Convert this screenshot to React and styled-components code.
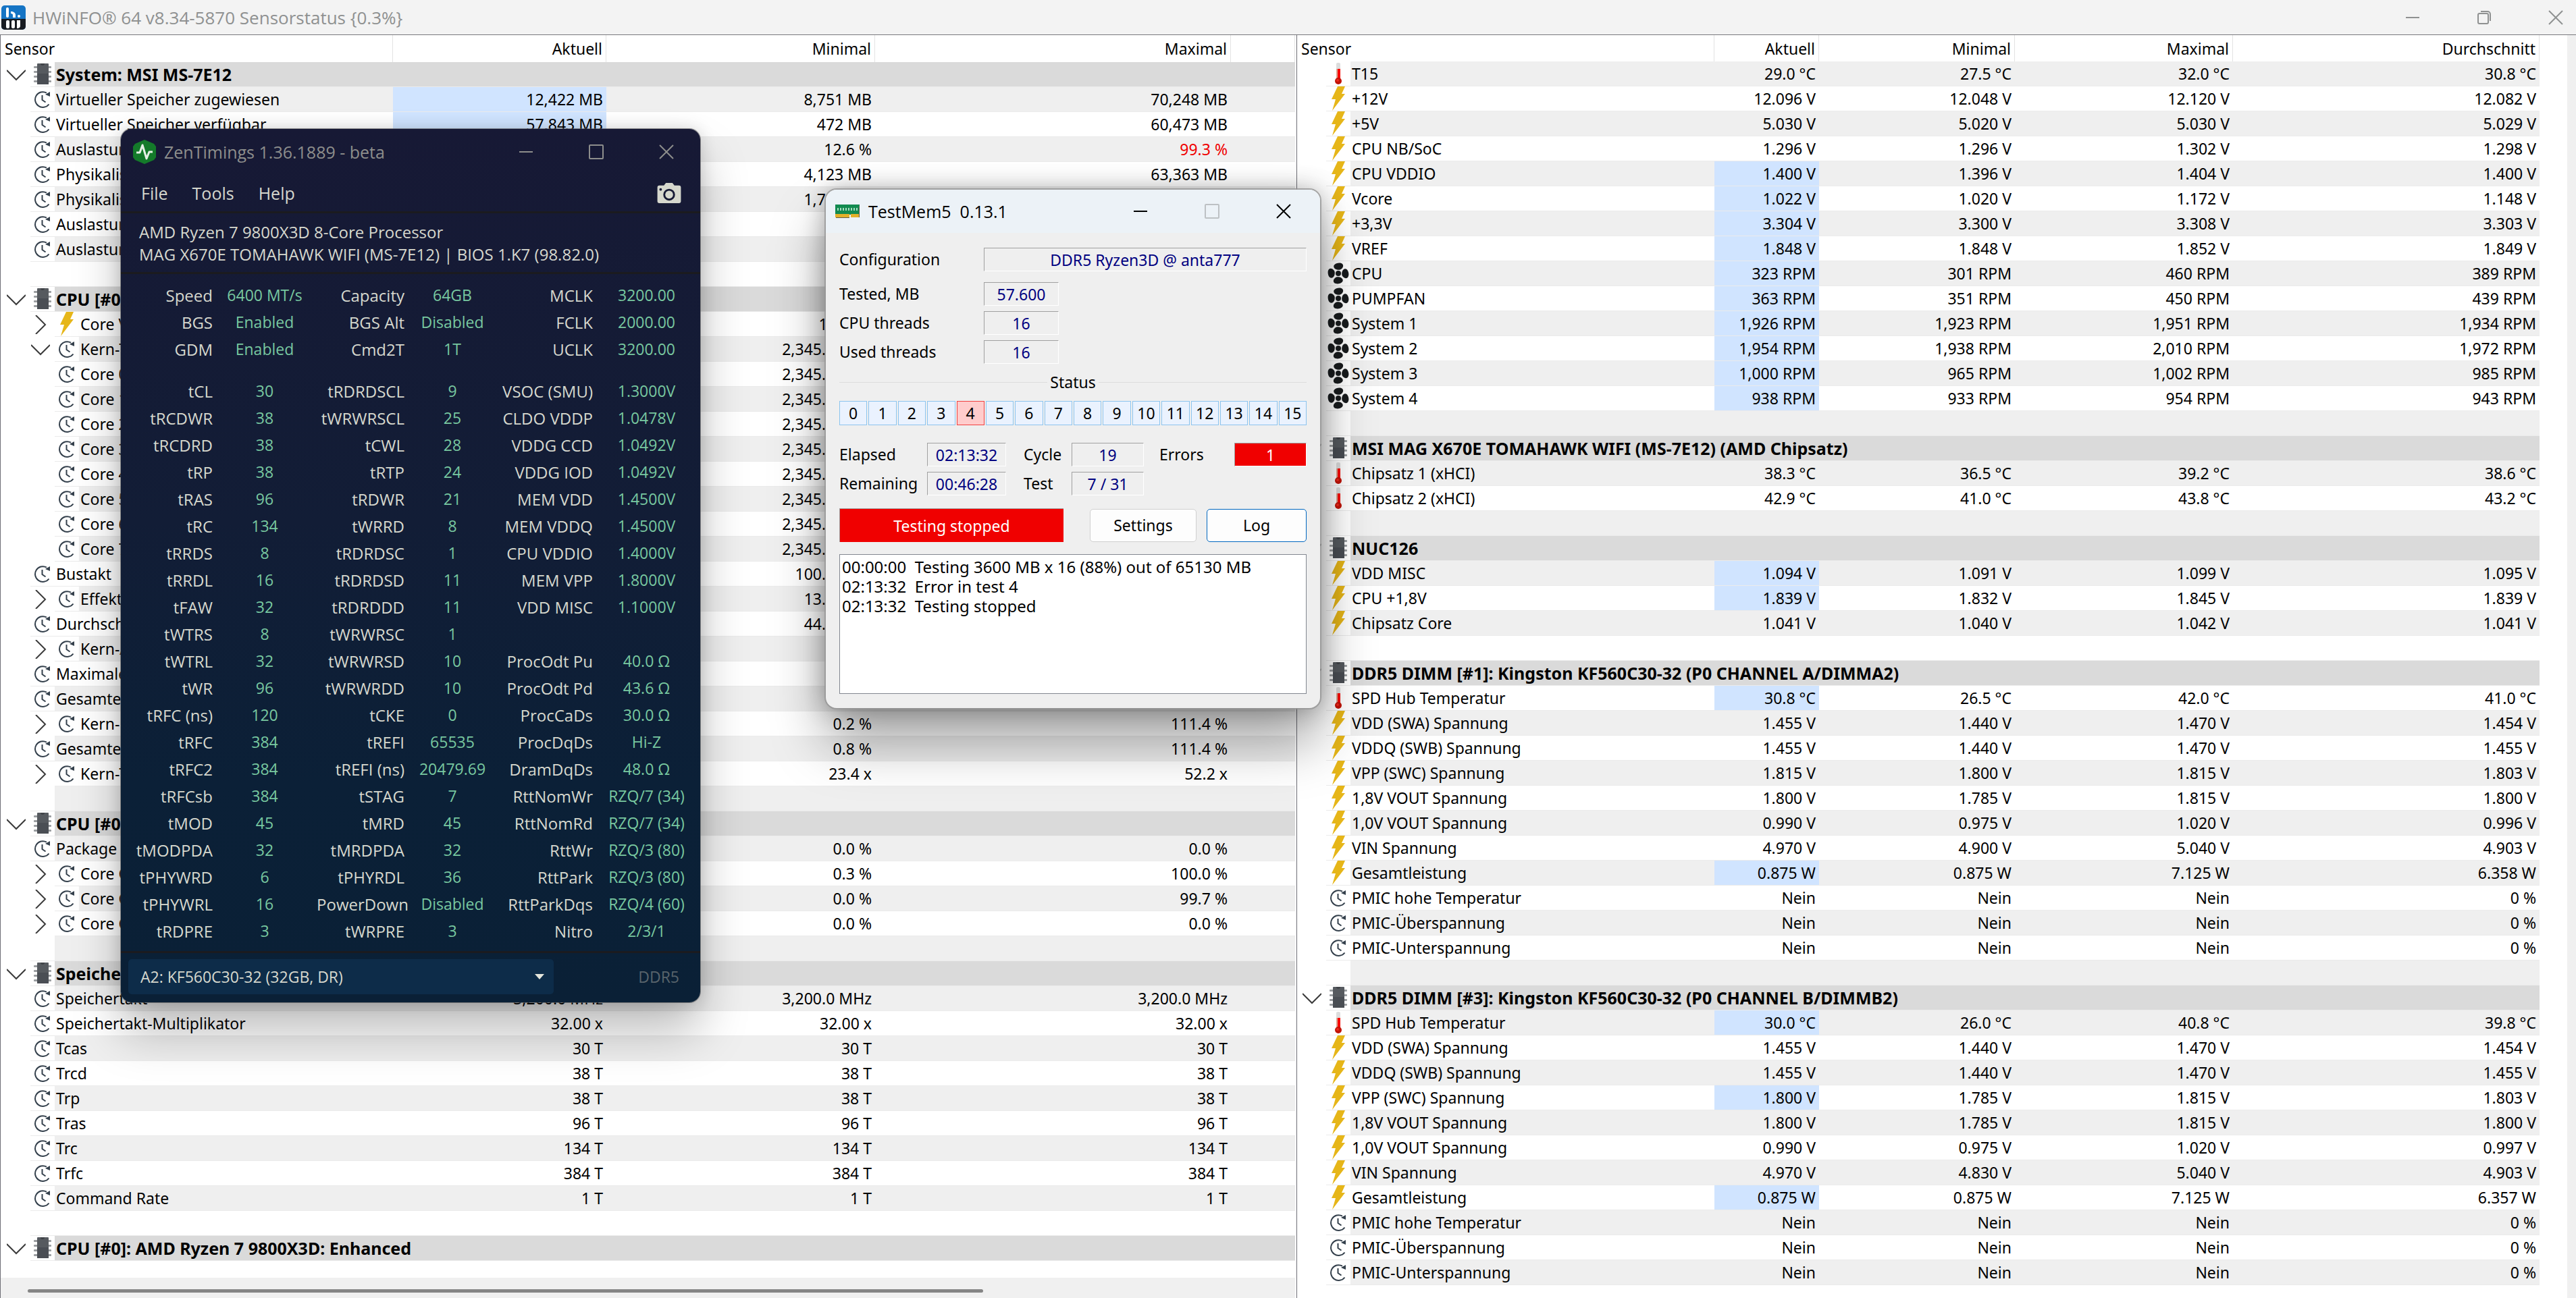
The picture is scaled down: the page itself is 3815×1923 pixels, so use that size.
import React from 'react'
import styled, { createGlobalStyle, css } from 'styled-components'

const GlobalStyle = createGlobalStyle`
  * { box-sizing: border-box; }
  body { margin: 0; background: #fff; }
  button, input, select, textarea { font: inherit; color: inherit; margin: 0; }
`

const tahoma = "'Noto Sans', 'Open Sans', sans-serif"
const segoe = "'Open Sans', 'Noto Sans', sans-serif"

/* ---------- data ---------- */

const g = name => ({ kind: 'group', icon: 'chip', name })
const blank = () => ({ kind: 'blank' })
const row = (icon, name, values = [], extra = {}) => ({ kind: 'row', icon, name, values, ...extra })
const child = (name, values, caret, icon = 'clock') => row(icon, name, values, { nested: true, caret })

const core = n => child(`Core ${n}`, ['', '2,345.6 MHz', ''])

const leftRows = [
  g('System: MSI MS-7E12'),
  row('clock', 'Virtueller Speicher zugewiesen', ['12,422 MB', '8,751 MB', '70,248 MB'], { hot: true }),
  row('clock', 'Virtueller Speicher verfügbar', ['57,843 MB', '472 MB', '60,473 MB'], { hot: true }),
  row('clock', 'Auslastung', ['', '12.6 %', '99.3 %'], { alert: 2 }),
  row('clock', 'Physikalisch', ['', '4,123 MB', '63,363 MB']),
  row('clock', 'Physikalisch', ['', '1,780 MB', '']),
  row('clock', 'Auslastung'),
  row('clock', 'Auslastung'),
  blank(),
  g('CPU [#0]'),
  child('Core VIDs', ['', '1.050 V', ''], 'right', 'bolt'),
  child('Kern-Takte', ['', '2,345.6 MHz', ''], 'down'),
  ...[0, 1, 2, 3, 4, 5, 6, 7].map(core),
  row('clock', 'Bustakt', ['', '100.0 MHz', '']),
  child('Effektiv', ['', '13.1 MHz', ''], 'right'),
  row('clock', 'Durchschnitt', ['', '44.1 MHz', '']),
  child('Kern-Auslastung', [], 'right'),
  row('clock', 'Maximale'),
  row('clock', 'Gesamte'),
  child('Kern-Nutzung', ['', '0.2 %', '111.4 %'], 'right'),
  row('clock', 'Gesamte', ['', '0.8 %', '111.4 %']),
  child('Kern-Takt', ['', '23.4 x', '52.2 x'], 'right'),
  blank(),
  g('CPU [#0]'),
  row('clock', 'Package', ['', '0.0 %', '0.0 %']),
  child('Core C0', ['', '0.3 %', '100.0 %'], 'right'),
  child('Core C1', ['', '0.0 %', '99.7 %'], 'right'),
  child('Core C6', ['', '0.0 %', '0.0 %'], 'right'),
  blank(),
  g('Speicher'),
  row('clock', 'Speichertakt', ['3,200.0 MHz', '3,200.0 MHz', '3,200.0 MHz']),
  row('clock', 'Speichertakt-Multiplikator', ['32.00 x', '32.00 x', '32.00 x']),
  row('clock', 'Tcas', ['30 T', '30 T', '30 T']),
  row('clock', 'Trcd', ['38 T', '38 T', '38 T']),
  row('clock', 'Trp', ['38 T', '38 T', '38 T']),
  row('clock', 'Tras', ['96 T', '96 T', '96 T']),
  row('clock', 'Trc', ['134 T', '134 T', '134 T']),
  row('clock', 'Trfc', ['384 T', '384 T', '384 T']),
  row('clock', 'Command Rate', ['1 T', '1 T', '1 T']),
  blank(),
  g('CPU [#0]: AMD Ryzen 7 9800X3D: Enhanced'),
]

const hot = { hot: true }

const rightRows = [
  row('temp', 'T15', ['29.0 °C', '27.5 °C', '32.0 °C', '30.8 °C']),
  row('bolt', '+12V', ['12.096 V', '12.048 V', '12.120 V', '12.082 V']),
  row('bolt', '+5V', ['5.030 V', '5.020 V', '5.030 V', '5.029 V']),
  row('bolt', 'CPU NB/SoC', ['1.296 V', '1.296 V', '1.302 V', '1.298 V']),
  row('bolt', 'CPU VDDIO', ['1.400 V', '1.396 V', '1.404 V', '1.400 V'], hot),
  row('bolt', 'Vcore', ['1.022 V', '1.020 V', '1.172 V', '1.148 V'], hot),
  row('bolt', '+3,3V', ['3.304 V', '3.300 V', '3.308 V', '3.303 V'], hot),
  row('bolt', 'VREF', ['1.848 V', '1.848 V', '1.852 V', '1.849 V'], hot),
  row('fan', 'CPU', ['323 RPM', '301 RPM', '460 RPM', '389 RPM'], hot),
  row('fan', 'PUMPFAN', ['363 RPM', '351 RPM', '450 RPM', '439 RPM'], hot),
  row('fan', 'System 1', ['1,926 RPM', '1,923 RPM', '1,951 RPM', '1,934 RPM'], hot),
  row('fan', 'System 2', ['1,954 RPM', '1,938 RPM', '2,010 RPM', '1,972 RPM'], hot),
  row('fan', 'System 3', ['1,000 RPM', '965 RPM', '1,002 RPM', '985 RPM'], hot),
  row('fan', 'System 4', ['938 RPM', '933 RPM', '954 RPM', '943 RPM'], hot),
  blank(),
  g('MSI MAG X670E TOMAHAWK WIFI (MS-7E12) (AMD Chipsatz)'),
  row('temp', 'Chipsatz 1 (xHCI)', ['38.3 °C', '36.5 °C', '39.2 °C', '38.6 °C']),
  row('temp', 'Chipsatz 2 (xHCI)', ['42.9 °C', '41.0 °C', '43.8 °C', '43.2 °C']),
  blank(),
  g('NUC126'),
  row('bolt', 'VDD MISC', ['1.094 V', '1.091 V', '1.099 V', '1.095 V'], hot),
  row('bolt', 'CPU +1,8V', ['1.839 V', '1.832 V', '1.845 V', '1.839 V'], hot),
  row('bolt', 'Chipsatz Core', ['1.041 V', '1.040 V', '1.042 V', '1.041 V']),
  blank(),
  g('DDR5 DIMM [#1]: Kingston KF560C30-32 (P0 CHANNEL A/DIMMA2)'),
  row('temp', 'SPD Hub Temperatur', ['30.8 °C', '26.5 °C', '42.0 °C', '41.0 °C'], hot),
  row('bolt', 'VDD (SWA) Spannung', ['1.455 V', '1.440 V', '1.470 V', '1.454 V']),
  row('bolt', 'VDDQ (SWB) Spannung', ['1.455 V', '1.440 V', '1.470 V', '1.455 V']),
  row('bolt', 'VPP (SWC) Spannung', ['1.815 V', '1.800 V', '1.815 V', '1.803 V']),
  row('bolt', '1,8V VOUT Spannung', ['1.800 V', '1.785 V', '1.815 V', '1.800 V']),
  row('bolt', '1,0V VOUT Spannung', ['0.990 V', '0.975 V', '1.020 V', '0.996 V']),
  row('bolt', 'VIN Spannung', ['4.970 V', '4.900 V', '5.040 V', '4.903 V']),
  row('bolt', 'Gesamtleistung', ['0.875 W', '0.875 W', '7.125 W', '6.358 W'], hot),
  row('clock', 'PMIC hohe Temperatur', ['Nein', 'Nein', 'Nein', '0 %']),
  row('clock', 'PMIC-Überspannung', ['Nein', 'Nein', 'Nein', '0 %']),
  row('clock', 'PMIC-Unterspannung', ['Nein', 'Nein', 'Nein', '0 %']),
  blank(),
  g('DDR5 DIMM [#3]: Kingston KF560C30-32 (P0 CHANNEL B/DIMMB2)'),
  row('temp', 'SPD Hub Temperatur', ['30.0 °C', '26.0 °C', '40.8 °C', '39.8 °C'], hot),
  row('bolt', 'VDD (SWA) Spannung', ['1.455 V', '1.440 V', '1.470 V', '1.454 V']),
  row('bolt', 'VDDQ (SWB) Spannung', ['1.455 V', '1.440 V', '1.470 V', '1.455 V']),
  row('bolt', 'VPP (SWC) Spannung', ['1.800 V', '1.785 V', '1.815 V', '1.803 V'], hot),
  row('bolt', '1,8V VOUT Spannung', ['1.800 V', '1.785 V', '1.815 V', '1.800 V']),
  row('bolt', '1,0V VOUT Spannung', ['0.990 V', '0.975 V', '1.020 V', '0.997 V']),
  row('bolt', 'VIN Spannung', ['4.970 V', '4.830 V', '5.040 V', '4.903 V']),
  row('bolt', 'Gesamtleistung', ['0.875 W', '0.875 W', '7.125 W', '6.357 W'], hot),
  row('clock', 'PMIC hohe Temperatur', ['Nein', 'Nein', 'Nein', '0 %']),
  row('clock', 'PMIC-Überspannung', ['Nein', 'Nein', 'Nein', '0 %']),
  row('clock', 'PMIC-Unterspannung', ['Nein', 'Nein', 'Nein', '0 %']),
]

const speeds = [
  ['Speed', '6400 MT/s', 'Capacity', '64GB', 'MCLK', '3200.00'],
  ['BGS', 'Enabled', 'BGS Alt', 'Disabled', 'FCLK', '2000.00'],
  ['GDM', 'Enabled', 'Cmd2T', '1T', 'UCLK', '3200.00'],
]

const timings = [
  ['tCL', '30', 'tRDRDSCL', '9', 'VSOC (SMU)', '1.3000V'],
  ['tRCDWR', '38', 'tWRWRSCL', '25', 'CLDO VDDP', '1.0478V'],
  ['tRCDRD', '38', 'tCWL', '28', 'VDDG CCD', '1.0492V'],
  ['tRP', '38', 'tRTP', '24', 'VDDG IOD', '1.0492V'],
  ['tRAS', '96', 'tRDWR', '21', 'MEM VDD', '1.4500V'],
  ['tRC', '134', 'tWRRD', '8', 'MEM VDDQ', '1.4500V'],
  ['tRRDS', '8', 'tRDRDSC', '1', 'CPU VDDIO', '1.4000V'],
  ['tRRDL', '16', 'tRDRDSD', '11', 'MEM VPP', '1.8000V'],
  ['tFAW', '32', 'tRDRDDD', '11', 'VDD MISC', '1.1000V'],
  ['tWTRS', '8', 'tWRWRSC', '1', '', ''],
  ['tWTRL', '32', 'tWRWRSD', '10', 'ProcOdt Pu', '40.0 Ω'],
  ['tWR', '96', 'tWRWRDD', '10', 'ProcOdt Pd', '43.6 Ω'],
  ['tRFC (ns)', '120', 'tCKE', '0', 'ProcCaDs', '30.0 Ω'],
  ['tRFC', '384', 'tREFI', '65535', 'ProcDqDs', 'Hi-Z'],
  ['tRFC2', '384', 'tREFI (ns)', '20479.69', 'DramDqDs', '48.0 Ω'],
  ['tRFCsb', '384', 'tSTAG', '7', 'RttNomWr', 'RZQ/7 (34)'],
  ['tMOD', '45', 'tMRD', '45', 'RttNomRd', 'RZQ/7 (34)'],
  ['tMODPDA', '32', 'tMRDPDA', '32', 'RttWr', 'RZQ/3 (80)'],
  ['tPHYWRD', '6', 'tPHYRDL', '36', 'RttPark', 'RZQ/3 (80)'],
  ['tPHYWRL', '16', 'PowerDown', 'Disabled', 'RttParkDqs', 'RZQ/4 (60)'],
  ['tRDPRE', '3', 'tWRPRE', '3', 'Nitro', '2/3/1'],
]

/* ---------- icons ---------- */

const ClockIcon = () => (
  <svg width="26" height="26" viewBox="0 0 26 26" fill="none" stroke="#34404c">
    <path d="M19 3.6A11.4 11.4 0 1 0 22.5 20.5" strokeWidth="2" />
    <path d="M24 2v7l-7-3z" fill="#34404c" stroke="none" />
    <path d="M12.5 7v7l5 3.5" strokeWidth="2" />
  </svg>
)

const BoltIcon = () => (
  <svg width="20" height="36" viewBox="0 0 20 36">
    <path d="M9 0h11l-5 11h5L1 36l5-17H0z" fill="#e6b619" />
  </svg>
)

const TempIcon = () => (
  <svg width="10" height="34" viewBox="0 0 10 34">
    <rect x="2" y="1" width="6" height="28" rx="2" fill="#dcdcdc" />
    <rect x="2" y="10" width="2" height="16" fill="#d9a793" />
    <rect x="4" y="10" width="4" height="16" fill="#fa0a04" />
    <circle cx="5" cy="28" r="5" fill="#c21408" />
    <circle cx="4" cy="27" r="2" fill="#f0281c" />
  </svg>
)

const FanIcon = () => (
  <svg width="32" height="32" viewBox="0 0 32 32" fill="#191c1e">
    {[0, 90, 180, 270].map(a => (
      <path
        key={a}
        transform={`rotate(${a} 16 16)`}
        d="M14 10.500C10 9.500 8 6 10 3.500 12.500.5 19-.5 22 2c2.500 2.500.5 6-1.500 7.500-1.500 1.500-4 1.500-6.500 1z"
      />
    ))}
    <circle cx="16" cy="16" r="4" />
  </svg>
)

const ChipIcon = () => (
  <svg width="28" height="34" viewBox="0 0 28 34">
    <g fill="#9b9ea1">
      {[5, 12, 19, 26].map(y => <rect key={y} x="1" y={y} width="26" height="3" rx="1" />)}
    </g>
    <rect x="6" y="1" width="17" height="31" rx="1" fill="#565a5f" />
    <rect x="6" y="16" width="17" height="16" fill="#4a4e54" />
    <path d="M11 1a3 3 0 0 0 6 0z" fill="#3f4247" />
  </svg>
)

const Caret = ({ dir }) => (
  <svg width="28" height="28" viewBox="0 0 28 28" fill="none" stroke="#3c3c3c" strokeWidth="2">
    {dir === 'down' ? <path d="M0 7l14 14L28 7" /> : <path d="M7 0l14 14L7 28" />}
  </svg>
)

const icons = { clock: ClockIcon, bolt: BoltIcon, temp: TempIcon, fan: FanIcon, chip: ChipIcon }

const HwinfoLogo = () => (
  <svg width="36" height="36" viewBox="0 0 36 36">
    <rect width="36" height="36" rx="5" fill="#1574c4" />
    <path d="M0 20h36v11a5 5 0 0 1-5 5H5a5 5 0 0 1-5-5z" fill="#171b21" />
    <g fill="#fff">
      <rect x="7" y="3" width="4" height="15" rx="2" />
      <path d="M14 9c4 0 7 2 7 5v4h-4v-4c0-1-1-2-3-2z" />
      <circle cx="26" cy="16" r="2" />
      <rect x="7" y="22" width="5" height="12" rx="2" />
      <rect x="15" y="22" width="5" height="12" rx="2" />
      <path d="M23 22h5v8c0 3-2 4-5 4z" />
    </g>
  </svg>
)

const ZenLogo = () => (
  <svg width="34" height="36" viewBox="0 0 34 36">
    <path d="M17 0l14 6 3 4v16l-3 4-14 6-14-6-3-4V10l3-4z" fill="#147a2a" />
    <path d="M5 19h5l4-11 6 20 4-10h5" fill="none" stroke="#e6f0e6" strokeWidth="3" strokeLinejoin="round" />
  </svg>
)

const RamLogo = () => (
  <svg width="38" height="22" viewBox="0 0 38 22">
    <rect x="1" y="1" width="36" height="15" fill="#128a50" />
    <path d="M4 6h2v4h-2zM8 6h2v4h-2zM12 6h2v4h-2zM16 6h2v4h-2zM20 6h2v4h-2zM24 6h2v4h-2zM28 6h2v4h-2zM32 6h2v4h-2z" fill="#a8dcc0" />
    <path d="M1 15h21v5H1zM24 15h12v5H24z" fill="#e3b02a" />
    <path d="M36 3h1v17h-1zM2 20h20v1H2z" fill="#5d5d4a" />
  </svg>
)

const CameraIcon = () => (
  <svg width="36" height="30" viewBox="0 0 36 31">
    <path
      fillRule="evenodd"
      fill="#d6d8ce"
      d="M13 0h10l3 4h7a3 3 0 0 1 3 3v21a3 3 0 0 1-3 3H3a3 3 0 0 1-3-3V7a3 3 0 0 1 3-3h7zM18 9a9 9 0 1 0 0 18 9 9 0 0 0 0-18zM5 8a2 2 0 1 0 0 4 2 2 0 0 0 0-4z"
    />
    <circle cx="18" cy="18" r="6" fill="#d6d8ce" />
  </svg>
)

const MinimizeIcon = () => (
  <svg width="22" height="22" viewBox="0 0 22 22" fill="none" stroke="currentColor" strokeWidth="2">
    <path d="M1 11h20" />
  </svg>
)

const MaximizeIcon = () => (
  <svg width="22" height="22" viewBox="0 0 22 22" fill="none" stroke="currentColor" strokeWidth="2">
    <rect x="1" y="1" width="20" height="20" rx="1" />
  </svg>
)

const RestoreIcon = () => (
  <svg width="22" height="22" viewBox="0 0 22 22" fill="none" stroke="currentColor" strokeWidth="2">
    <rect x="2" y="5" width="15" height="15" rx="2" />
    <path d="M6 2h10a4 4 0 0 1 4 4v10" />
  </svg>
)

const CloseIcon = () => (
  <svg width="22" height="22" viewBox="0 0 22 22" fill="none" stroke="currentColor" strokeWidth="2">
    <path d="M1 1l20 20M21 1L1 21" />
  </svg>
)

/* ---------- HWiNFO ---------- */

const Desktop = styled.div`
  position: relative;
  display: flex;
  flex-direction: column;
  min-height: 100vh;
  overflow: hidden;
  color: #000;
  font: 23px/36px ${tahoma};
`

const TitleBar = styled.header`
  display: flex;
  align-items: center;
  height: 52px;
  padding-left: 2px;
  background: #f3f3f3;
  border-bottom: 1px solid #77777c;
  color: #8f9191;
  font: 26px/36px ${segoe};
`

const Title = styled.span`
  flex: 1;
  white-space: pre;
  margin-left: ${p => p.gap || 10}px;
`

const WinButtons = styled.div`
  display: flex;
  gap: ${p => p.gap}px;
`

const WinButton = styled.button`
  display: flex;
  align-items: center;
  justify-content: center;
  width: 60px;
  height: 44px;
  padding: 0;
  border: none;
  background: none;
`

const Panels = styled.main`
  display: grid;
  flex: 1;
  grid-template-columns: minmax(0, 1920fr) minmax(0, 1895fr);
`

const Panel = styled.section`
  display: flex;
  flex-direction: column;
  padding-right: ${p => p.right}px;
  border-left: 1px solid #6e6e76;
  background: #fff;
`

const SensorTable = styled.table`
  width: 100%;
  table-layout: fixed;
  border-spacing: 0;
`

const HeadCell = styled.th`
  height: ${p => p.h}px;
  padding: 0 5px 0 6px;
  border-right: 1px solid #e3e3e3;
  font-weight: 400;
  line-height: 30px;
  text-align: ${p => (p.first ? 'left' : 'right')};
`

const rowBg = css`
  background: ${p => (p.group ? '#dadada' : p.odd ? '#efefef' : '#fff')};
`

const NameCell = styled.td`
  padding: 0;
`

const NameFlex = styled.div`
  display: flex;
  height: 37px;
`

const Gutter = styled.div`
  display: flex;
  flex: none;
  align-items: center;
  justify-content: flex-end;
  width: ${p => p.w}px;
  padding-right: 7px;
`

const IconSlot = styled.div`
  display: flex;
  flex: none;
  align-items: center;
  justify-content: center;
  width: 36px;
  border-bottom: 1px solid #ebebeb;
`

const Name = styled.div`
  ${rowBg}
  flex: 1;
  padding-left: 2px;
  border-bottom: 1px solid #ebebeb;
  white-space: nowrap;
  ${p => p.group && 'font-size: 25px; font-weight: 700;'}
`

const ValueCell = styled.td`
  ${rowBg}
  height: 37px;
  padding: 0 5px 0 0;
  border-bottom: 1px solid #ebebeb;
  text-align: right;
  white-space: nowrap;
  ${p => p.hot && 'background: #d0e4ff;'}
  ${p => p.alert && 'color: #f00000;'}
`

const ScrollTrack = styled.div`
  display: flex;
  align-items: center;
  height: 30px;
  margin-top: auto;
  padding: 8px 0 0 40px;
  background: #f0f0f0;
`

const ScrollThumb = styled.div`
  width: 75.4%;
  height: 5px;
  border-radius: 3px;
  background: #858585;
`

const VerticalTrack = styled.div`
  width: 13px;
  background: #f0f0f0;
`

const RightSide = styled.div`
  display: flex;
  min-width: 0;
  > section { flex: 1; min-width: 0; }
`

const SensorRow = ({ data, odd, gutter, columns }) => {
  const { kind, icon, name, values = [], nested, caret } = data
  const group = kind === 'group'
  const Icon = icons[icon]
  const bg = { group, odd }

  if (group) {
    return (
      <tr>
        <NameCell colSpan={columns}>
          <NameFlex>
            <Gutter w={gutter}><Caret dir="down" /></Gutter>
            <IconSlot><Icon /></IconSlot>
            <Name {...bg}>{name}</Name>
          </NameFlex>
        </NameCell>
      </tr>
    )
  }
  return (
    <tr>
      <NameCell>
        <NameFlex>
          <Gutter w={nested ? gutter + 36 : gutter}>{caret && <Caret dir={caret} />}</Gutter>
          <IconSlot>{Icon && <Icon />}</IconSlot>
          <Name {...bg}>{name}</Name>
        </NameFlex>
      </NameCell>
      {Array.from({ length: columns - 1 }, (_, i) => (
        <ValueCell key={i} {...bg} hot={data.hot && i === 0} alert={data.alert === i}>
          {values[i]}
        </ValueCell>
      ))}
    </tr>
  )
}

const SensorList = ({ rows, widths, headHeight, gutter, oddFirst, lastTitle }) => (
  <SensorTable>
    <colgroup>
      {widths.map((w, i) => <col key={i} width={w} />)}
    </colgroup>
    <thead>
      <tr>
        <HeadCell h={headHeight} first>Sensor</HeadCell>
        <HeadCell h={headHeight}>Aktuell</HeadCell>
        <HeadCell h={headHeight}>Minimal</HeadCell>
        <HeadCell h={headHeight}>Maximal</HeadCell>
        <HeadCell h={headHeight}>{lastTitle}</HeadCell>
      </tr>
    </thead>
    <tbody>
      {rows.map((r, i) => (
        <SensorRow key={i} data={r} odd={i % 2 === (oddFirst ? 0 : 1)} gutter={gutter} columns={5} />
      ))}
    </tbody>
  </SensorTable>
)

/* ---------- ZenTimings ---------- */

const ZenWindow = styled.section`
  position: absolute;
  left: 179px;
  top: 191px;
  width: 858px;
  display: flex;
  flex-direction: column;
  border-radius: 16px;
  background: linear-gradient(#171935, #121d36 45%, #0b2037 75%, #0a2036);
  box-shadow: 0 0 0 1px rgba(90, 90, 90, .6), 0 0 24px rgba(0, 0, 0, .16), 0 44px 70px rgba(0, 0, 0, .26);
  color: #d6d8ce;
  font: 24px/33px ${segoe};
`

const ZenTitleBar = styled.header`
  display: flex;
  align-items: center;
  height: 68px;
  padding: 0 20px 0 18px;
  color: #8d8e8c;
  font-size: 25px;
`

const ZenMenu = styled.nav`
  display: flex;
  align-items: center;
  gap: 36px;
  height: 54px;
  padding: 0 28px 0 30px;
  font-size: 25px;

  button {
    padding: 0;
    border: none;
    background: none;
  }
  button:last-child {
    display: flex;
    margin-left: auto;
  }
`

const ZenInfo = styled.div`
  height: 90px;
  padding: 11px 27px 0;
  border-top: 3px solid #1b1b1f;
`

const ZenBody = styled.div`
  padding: 11px 0 10px;
  border-top: 3px solid #1b1b1f;
  border-bottom: 3px solid #1b1b1f;
`

const TimingTable = styled.table`
  width: 100%;
  table-layout: fixed;
  border-spacing: 0;

  th {
    padding: 0;
    font-weight: 400;
    text-align: right;
    white-space: nowrap;
  }
  td {
    padding: 0;
    color: #78c8a0;
    font-size: 23px;
    text-align: center;
    white-space: nowrap;
  }
  tr { height: 40px; }
`

const GapRow = styled.tr`
  && { height: 22px; }
`

const ZenFooter = styled.footer`
  display: flex;
  align-items: center;
  justify-content: space-between;
  padding: 9px 31px 12px 11px;
  color: #59646c;
  font-size: 23px;
`

const SlotBox = styled.div`
  display: flex;
  align-items: center;
  width: 630px;
  height: 52px;
  padding-right: 14px;
  border-radius: 5px;
  background: #0d2c49;
  color: #d6d8ce;

  select {
    flex: 1;
    appearance: none;
    padding: 0 18px;
    border: none;
    background: none;
  }
`

const TimingRow = ({ cells }) => (
  <tr>
    {cells.map((c, i) => (i % 2 ? <td key={i}>{c}</td> : <th key={i} scope="row">{c}</th>))}
  </tr>
)

const ZenTimings = () => (
  <ZenWindow>
    <ZenTitleBar>
      <ZenLogo />
      <Title gap={12}>ZenTimings 1.36.1889 - beta</Title>
      <WinButtons gap={44}>
        <WinButton aria-label="Minimieren"><MinimizeIcon /></WinButton>
        <WinButton aria-label="Maximieren"><MaximizeIcon /></WinButton>
        <WinButton aria-label="Schließen"><CloseIcon /></WinButton>
      </WinButtons>
    </ZenTitleBar>
    <ZenMenu>
      <button>File</button>
      <button>Tools</button>
      <button>Help</button>
      <button aria-label="Screenshot"><CameraIcon /></button>
    </ZenMenu>
    <ZenInfo>
      <div>AMD Ryzen 7 9800X3D 8-Core Processor</div>
      <div>MAG X670E TOMAHAWK WIFI (MS-7E12) | BIOS 1.K7 (98.82.0)</div>
    </ZenInfo>
    <ZenBody>
      <TimingTable>
        <colgroup>
          <col width="136" />
          <col width="154" />
          <col width="130" />
          <col width="142" />
          <col width="137" />
          <col />
        </colgroup>
        <tbody>
          {speeds.map(r => <TimingRow key={r[0]} cells={r} />)}
          <GapRow />
          {timings.map(r => <TimingRow key={r[0]} cells={r} />)}
        </tbody>
      </TimingTable>
    </ZenBody>
    <ZenFooter>
      <SlotBox>
        <select aria-label="DIMM">
          <option>A2: KF560C30-32 (32GB, DR)</option>
        </select>
        <svg width="14" height="8" viewBox="0 0 14 8"><path d="M0 0h14L7 8z" fill="#e4e6dc" /></svg>
      </SlotBox>
      <span>DDR5</span>
    </ZenFooter>
  </ZenWindow>
)

/* ---------- TestMem5 ---------- */

const MemWindow = styled.section`
  position: absolute;
  left: 1223px;
  top: 281px;
  width: 732px;
  border-radius: 16px;
  background: #efefef;
  box-shadow: 0 0 0 2px rgba(150, 150, 150, .8), 0 0 36px rgba(0, 0, 0, .3), 0 50px 80px rgba(0, 0, 0, .36);
  font: 23px/29px ${tahoma};
`

const MemTitleBar = styled.header`
  display: flex;
  align-items: center;
  height: 64px;
  padding: 0 24px 0 13px;
  border-radius: 16px 16px 0 0;
  background: #ecf2f7;
  font: 25px/32px ${segoe};

  button:disabled { color: #bdc1c4; }
`

const MemBody = styled.div`
  display: flex;
  flex-direction: column;
  padding: 22px 20px 21px;
`

const FieldRow = styled.div`
  display: flex;
  align-items: center;
  margin-bottom: ${p => p.after || 8}px;
`

const Label = styled.label`
  width: ${p => p.w}px;
  white-space: nowrap;
`

const Field = styled.input`
  width: ${p => p.w}px;
  height: 35px;
  padding: 0;
  border: 1px solid;
  border-color: #a0a0a0 #fff #fff #a0a0a0;
  background: ${p => (p.error ? '#f00000' : '#efefef')};
  && { color: ${p => (p.error ? '#fff' : '#000080')}; }
  text-align: center;
  ${p => p.grow && 'flex: 1;'}
  ${p => p.after && `margin-right: ${p.after}px;`}
`

const StatusLine = styled.div`
  display: flex;
  align-items: center;
  gap: 4px;
  margin: 5px 0 13px;

  &::before, &::after {
    content: '';
    flex: 1;
    height: 1px;
    background: #dcdcdc;
  }
`

const Threads = styled.div`
  display: grid;
  grid-template-columns: repeat(16, 1fr);
  gap: 2px;
  margin-bottom: 26px;
`

const Thread = styled.span`
  height: 36px;
  border: 1px solid ${p => (p.failed ? '#f04040' : '#8cc4ee')};
  background: ${p => (p.failed ? '#ffcccc' : '#eaf2fe')};
  line-height: 34px;
  text-align: center;
`

const Actions = styled.div`
  display: flex;
  align-items: center;
  margin: 11px 0 18px;
`

const Banner = styled.div`
  width: 332px;
  height: 50px;
  margin-right: 39px;
  border-top: 1px solid #a0a0a0;
  border-left: 1px solid #a0a0a0;
  background: #f00000;
  color: #fff;
  line-height: 50px;
  text-align: center;
`

const PushButton = styled.button`
  width: ${p => p.w}px;
  height: 49px;
  margin-right: ${p => (p.focused ? 0 : 15)}px;
  padding: 0;
  border: 1px solid ${p => (p.focused ? '#0067c0' : '#d0d0d0')};
  border-radius: 5px;
  background: #fdfdfd;
`

const LogBox = styled.textarea`
  height: 207px;
  padding: 3px;
  border: 1px solid #828790;
  background: #fff;
  resize: none;
  white-space: pre;
  overflow: hidden;
  && { font-size: 24px; }
`

const logText = [
  '00:00:00  Testing 3600 MB x 16 (88%) out of 65130 MB',
  '02:13:32  Error in test 4',
  '02:13:32  Testing stopped',
].join('\n')

const TestMem = () => (
  <MemWindow>
    <MemTitleBar>
      <RamLogo />
      <Title gap={12}>TestMem5  0.13.1</Title>
      <WinButtons gap={46}>
        <WinButton aria-label="Minimieren"><MinimizeIcon /></WinButton>
        <WinButton disabled aria-label="Maximieren"><MaximizeIcon /></WinButton>
        <WinButton aria-label="Schließen"><CloseIcon /></WinButton>
      </WinButtons>
    </MemTitleBar>
    <MemBody>
      <FieldRow after={16}>
        <Label w={214} htmlFor="config">Configuration</Label>
        <Field id="config" grow readOnly value="DDR5 Ryzen3D @ anta777" />
      </FieldRow>
      <FieldRow>
        <Label w={214} htmlFor="tested">Tested, MB</Label>
        <Field id="tested" w={111} readOnly value="57.600" />
      </FieldRow>
      <FieldRow>
        <Label w={214} htmlFor="cpu">CPU threads</Label>
        <Field id="cpu" w={111} readOnly value="16" />
      </FieldRow>
      <FieldRow>
        <Label w={214} htmlFor="used">Used threads</Label>
        <Field id="used" w={111} readOnly value="16" />
      </FieldRow>
      <StatusLine>Status</StatusLine>
      <Threads>
        {Array.from({ length: 16 }, (_, i) => <Thread key={i} failed={i === 4}>{i}</Thread>)}
      </Threads>
      <FieldRow>
        <Label w={130} htmlFor="elapsed">Elapsed</Label>
        <Field id="elapsed" w={117} after={26} readOnly value="02:13:32" />
        <Label w={71} htmlFor="cycle">Cycle</Label>
        <Field id="cycle" w={107} after={23} readOnly value="19" />
        <Label w={111} htmlFor="errors">Errors</Label>
        <Field id="errors" grow error w={107} readOnly value="1" />
      </FieldRow>
      <FieldRow>
        <Label w={130} htmlFor="remaining">Remaining</Label>
        <Field id="remaining" w={117} after={26} readOnly value="00:46:28" />
        <Label w={71} htmlFor="test">Test</Label>
        <Field id="test" w={107} readOnly value="7 / 31" />
      </FieldRow>
      <Actions>
        <Banner>Testing stopped</Banner>
        <PushButton w={158}>Settings</PushButton>
        <PushButton w={148} focused>Log</PushButton>
      </Actions>
      <LogBox aria-label="Log" readOnly value={logText} />
    </MemBody>
  </MemWindow>
)

const App = () => (
  <Desktop>
    <GlobalStyle />
    <TitleBar>
      <HwinfoLogo />
      <Title>{'HWiNFO® 64 v8.34-5870 Sensorstatus {0.3%}'}</Title>
      <WinButtons gap={46}>
        <WinButton aria-label="Minimieren"><MinimizeIcon /></WinButton>
        <WinButton aria-label="Wiederherstellen"><RestoreIcon /></WinButton>
        <WinButton aria-label="Schließen"><CloseIcon /></WinButton>
      </WinButtons>
    </TitleBar>
    <Panels>
      <Panel right={2}>
        <SensorList
          rows={leftRows}
          widths={[581, 316, 398, 527, undefined]}
          headHeight={40}
          gutter={44}
        />
        <ScrollTrack><ScrollThumb /></ScrollTrack>
      </Panel>
      <RightSide>
        <Panel right={41}>
          <SensorList
            rows={rightRows}
            widths={[618, 155, 290, 323, undefined]}
            headHeight={39}
            gutter={43}
            oddFirst
            lastTitle="Durchschnitt"
          />
        </Panel>
        <VerticalTrack />
      </RightSide>
    </Panels>
    <ZenTimings />
    <TestMem />
  </Desktop>
)

export default App
